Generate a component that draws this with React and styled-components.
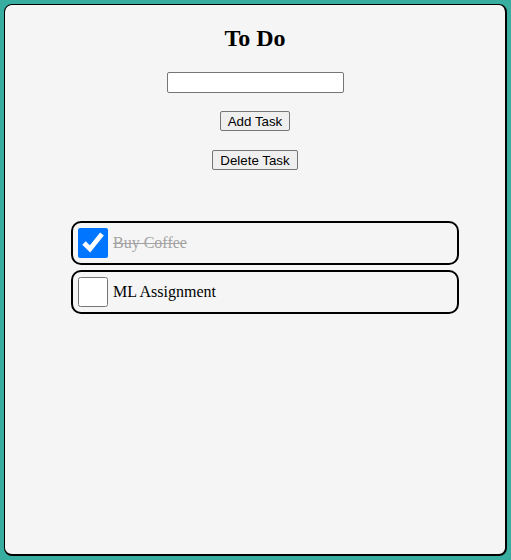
import React, { useState } from 'react';
import styled, { createGlobalStyle } from 'styled-components';

const GlobalStyle = createGlobalStyle`
  html, body {
    margin: 0;
    padding: 0;
    background: #37ae9f;
  }
  body {
    padding: 4px;
    font-family: "Liberation Serif", "Times New Roman", serif;
  }
`;

const Card = styled.div`
  box-sizing: border-box;
  height: 552px;
  background: #f5f5f5;
  border-style: solid;
  border-color: #000;
  border-width: 1px 2px 2px 1px;
  border-radius: 8px;
  display: flex;
  flex-direction: column;
  align-items: center;
  overflow: hidden;
`;

const Title = styled.h2`
  margin: 19px 0 0;
  font-size: 24px;
  line-height: 28px;
  font-weight: bold;
`;

const TaskInput = styled.input`
  box-sizing: border-box;
  width: 177px;
  height: 21px;
  margin-top: 20px;
  padding: 1px 2px;
  border: 1px solid #767676;
  border-radius: 2px;
  background: #fff;
  font: 13.333px "Liberation Sans", Arial, sans-serif;
`;

const Button = styled.button`
  box-sizing: border-box;
  height: 20px;
  margin-top: ${p => p.$gap}px;
  padding: 1px 7px;
  border: 1px solid #767676;
  border-radius: 2px;
  background: #efefef;
  color: #000;
  font: 13.333px "Liberation Sans", Arial, sans-serif;
`;

const List = styled.ul`
  list-style: none;
  align-self: stretch;
  margin: 51px 46px 0 66px;
  padding: 0;
  display: flex;
  flex-direction: column;
  gap: 5px;
`;

const Item = styled.li`
  display: flex;
  align-items: center;
  gap: 5px;
  padding: 5px;
  border: 2px solid #000;
  border-radius: 10px;
  font-size: 16px;
`;

const Check = styled.input`
  width: 30px;
  height: 30px;
  margin: 0;
`;

const Label = styled.span`
  color: ${p => (p.$done ? '#a3a3a3' : '#000')};
  text-decoration: ${p => (p.$done ? 'line-through' : 'none')};
`;

export default function App() {
  const [tasks, setTasks] = useState([
    { text: 'Buy Coffee', done: true },
    { text: 'ML Assignment', done: false },
  ]);

  const toggle = i =>
    setTasks(tasks.map((t, j) => (j === i ? { ...t, done: !t.done } : t)));

  return (
    <>
      <GlobalStyle />
      <Card>
        <Title>To Do</Title>
        <TaskInput type="text" />
        <Button $gap={18}>Add Task</Button>
        <Button $gap={19}>Delete Task</Button>
        <List>
          {tasks.map((t, i) => (
            <Item key={i}>
              <Check type="checkbox" checked={t.done} onChange={() => toggle(i)} />
              <Label $done={t.done}>{t.text}</Label>
            </Item>
          ))}
        </List>
      </Card>
    </>
  );
}
